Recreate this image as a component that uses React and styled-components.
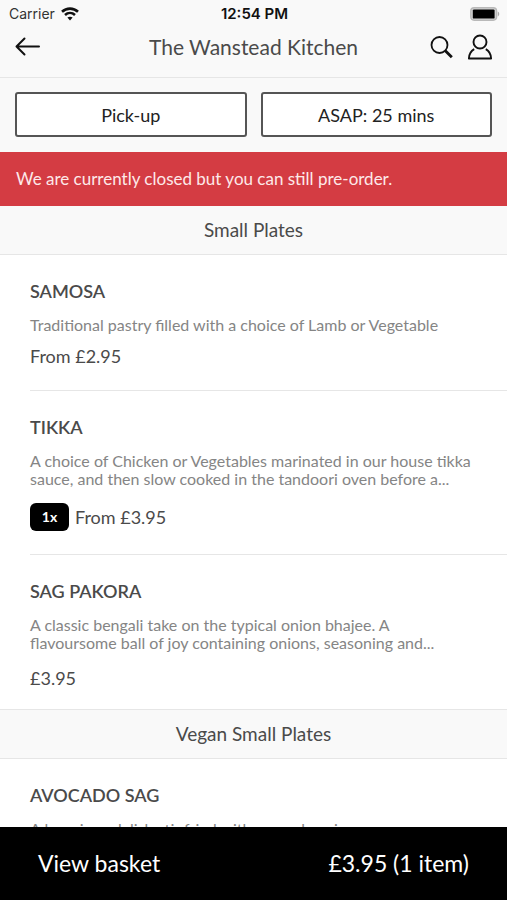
import React from "react";
import styled, { createGlobalStyle } from "styled-components";

const GlobalStyle = createGlobalStyle`
  *, *::before, *::after { box-sizing: border-box; }
  body {
    margin: 0;
    background: #fff;
    color: #4a4a4a;
    font-family: Lato, "Open Sans", sans-serif;
  }
  button { font: inherit; cursor: pointer; }
  h1, h2, h3, p, ul { margin: 0; padding: 0; }
`;

const Screen = styled.div`
  display: flex;
  flex-direction: column;
  height: 100vh;
`;

const StatusBar = styled.div`
  display: grid;
  grid-template-columns: 1fr auto 1fr;
  align-items: center;
  height: 27px;
  padding: 0 7px 0 9px;
  background: #f9f9f9;
  color: #111;
  font-family: Inter, sans-serif;
  font-size: 14px;
  line-height: 20px;
`;

const Carrier = styled.span`
  display: flex;
  align-items: center;
  gap: 6px;
  color: #333;
`;

const Clock = styled.time`
  font-size: 15px;
  font-weight: 600;
`;

const Battery = styled.svg`
  justify-self: end;
`;

const NavBar = styled.header`
  display: grid;
  grid-template-columns: 1fr auto 1fr;
  align-items: center;
  height: 51px;
  padding: 0 14px 10px;
  border-bottom: 1px solid #e6e6e6;
  background: #f9f9f9;
`;

const RestaurantName = styled.h1`
  font-size: 21px;
  font-weight: 400;
  line-height: 28px;
`;

const NavActions = styled.div`
  display: flex;
  justify-content: flex-end;
  gap: 12px;
`;

const IconButton = styled.button`
  display: flex;
  justify-self: start;
  padding: 0;
  border: 0;
  background: none;
  color: #111;
`;

const OrderOptions = styled.div`
  display: grid;
  grid-template-columns: 1fr 1fr;
  gap: 14px;
  padding: 14px 15px 15px;
  background: #f9f9f9;
`;

const OptionButton = styled.button`
  height: 45px;
  padding: 0;
  border: 2px solid #555;
  border-radius: 3px;
  background: #fff;
  color: #222;
  font-size: 18px;
  line-height: 24px;
`;

const ClosedNotice = styled.p`
  padding: 15px 16px;
  background: #d43c43;
  color: #fde9e9;
  font-size: 17px;
  line-height: 24px;
`;

const Menu = styled.main`
  flex: 1;
  min-height: 0;
  overflow-y: auto;
  scrollbar-width: none;
`;

const SectionTitle = styled.h2`
  padding: 12px 16px;
  border-bottom: 1px solid #e6e6e6;
  background: #f9f9f9;
  font-size: 19px;
  font-weight: 400;
  line-height: 24px;
  text-align: center;
`;

const DishList = styled.ul`
  list-style: none;
  border-bottom: 1px solid #e6e6e6;
`;

const Dish = styled.li`
  margin-left: 30px;
  padding: 25px 24px 23px 0;

  & + & { border-top: 1px solid #e6e6e6; }
  &:last-child { padding-bottom: 20px; }
`;

const DishName = styled.h3`
  font-size: 18px;
  font-weight: 600;
  line-height: 22px;
  text-transform: uppercase;
`;

const DishText = styled.p`
  margin-top: 14px;
  color: #858585;
  font-size: 16px;
  line-height: 18px;
  white-space: pre-line;
`;

const PriceRow = styled.div`
  display: flex;
  align-items: center;
  gap: 6px;
  margin-top: ${({ $compact }) => ($compact ? 11 : 15)}px;
  font-size: 18px;
  line-height: 22px;
`;

const Quantity = styled.span`
  width: 39px;
  border-radius: 6px;
  background: #000;
  color: #fff;
  font-size: 14px;
  font-weight: 700;
  line-height: 28px;
  text-align: center;
`;

const BasketButton = styled.button`
  display: flex;
  justify-content: space-between;
  padding: 22px 38px 23px;
  border: 0;
  background: #000;
  color: #fff;
  font-size: 23px;
  line-height: 28px;
`;

const sections = [
  {
    title: "Small Plates",
    dishes: [
      { name: "Samosa", text: "Traditional pastry filled with a choice of Lamb or Vegetable", price: "From £2.95", compact: true },
      { name: "Tikka", text: "A choice of Chicken or Vegetables marinated in our house tikka\nsauce, and then slow cooked in the tandoori oven before a...", price: "From £3.95", quantity: 1 },
      { name: "Sag Pakora", text: "A classic bengali take on the typical onion bhajee. A\nflavoursome ball of joy containing onions, seasoning and...", price: "£3.95" },
    ],
  },
  {
    title: "Vegan Small Plates",
    dishes: [
      { name: "Avocado Sag", text: "A luxurious delish stir fried with avocado spices" },
    ],
  },
];

function WifiIcon() {
  return (
    <svg width="18" height="14" viewBox="0 0 18 14" fill="none" stroke="#111" strokeWidth="2.6" aria-hidden="true">
      <path d="M1 4.8C5.5.6 12.5.6 17 4.8" />
      <path d="M4 8c2.9-2.6 7.1-2.6 10 0" />
      <path d="M6.4 10.6c1.5-1.3 3.7-1.3 5.2 0L9 13.4z" fill="#111" stroke="none" />
    </svg>
  );
}

function BatteryIcon() {
  return (
    <Battery width="30" height="14" viewBox="0 0 30 14" role="img" aria-label="Battery full">
      <rect x=".8" y=".8" width="25.8" height="12.4" rx="3.4" fill="#d4d4d4" stroke="#b9b9b9" strokeWidth="1.4" />
      <rect x="2.8" y="2.4" width="21.8" height="9.2" rx="1.2" fill="#000" />
      <path d="M27.8 4.6c1.9.7 1.9 4.1 0 4.8z" fill="#aaa" />
    </Battery>
  );
}

function BackIcon() {
  return (
    <svg width="27" height="22" viewBox="0 0 27 22" fill="none" stroke="currentColor" strokeWidth="2" strokeLinecap="round" strokeLinejoin="round" aria-hidden="true">
      <path d="M25 10.5H2.5M10.5 2.5l-8 8 8 8" />
    </svg>
  );
}

function SearchIcon() {
  return (
    <svg width="26" height="26" viewBox="0 0 26 26" fill="none" stroke="currentColor" aria-hidden="true">
      <circle cx="10.5" cy="11" r="8" strokeWidth="1.8" />
      <path d="M16.3 16.8l6.5 6.5" strokeWidth="2.8" />
    </svg>
  );
}

function AccountIcon() {
  return (
    <svg width="26" height="26" viewBox="0 0 26 26" fill="none" stroke="currentColor" strokeWidth="1.9" strokeLinejoin="round" aria-hidden="true">
      <circle cx="13" cy="8" r="6.5" />
      <path d="M7.2 15.2C4 17 2.1 20.6 1.9 24.5h22.2c-.2-3.9-2.1-7.5-5.3-9.3" />
    </svg>
  );
}

export default function App() {
  return (
    <Screen>
      <GlobalStyle />
      <StatusBar>
        <Carrier>Carrier <WifiIcon /></Carrier>
        <Clock>12:54 PM</Clock>
        <BatteryIcon />
      </StatusBar>
      <NavBar>
        <IconButton type="button" aria-label="Back"><BackIcon /></IconButton>
        <RestaurantName>The Wanstead Kitchen</RestaurantName>
        <NavActions>
          <IconButton type="button" aria-label="Search"><SearchIcon /></IconButton>
          <IconButton type="button" aria-label="Account"><AccountIcon /></IconButton>
        </NavActions>
      </NavBar>
      <OrderOptions>
        <OptionButton type="button">Pick-up</OptionButton>
        <OptionButton type="button">ASAP: 25 mins</OptionButton>
      </OrderOptions>
      <ClosedNotice>We are currently closed but you can still pre-order.</ClosedNotice>
      <Menu>
        {sections.map((section) => (
          <section key={section.title}>
            <SectionTitle>{section.title}</SectionTitle>
            <DishList>
              {section.dishes.map((dish) => (
                <Dish key={dish.name}>
                  <DishName>{dish.name}</DishName>
                  <DishText>{dish.text}</DishText>
                  {dish.price && (
                    <PriceRow $compact={dish.compact}>
                      {dish.quantity && <Quantity>{dish.quantity}x</Quantity>}
                      <span>{dish.price}</span>
                    </PriceRow>
                  )}
                </Dish>
              ))}
            </DishList>
          </section>
        ))}
      </Menu>
      <BasketButton type="button">
        <span>View basket</span>
        <span>£3.95 (1 item)</span>
      </BasketButton>
    </Screen>
  );
}
